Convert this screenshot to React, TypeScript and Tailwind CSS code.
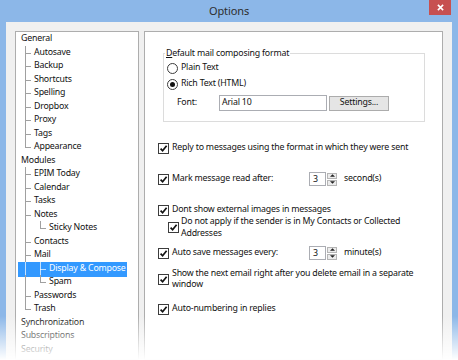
import React from "react";

type Row = { t: string; lv: number; v1?: "full" | "half" | "pass"; v2?: "full" | "half"; sel?: boolean };

const tree: Row[] = [
  { t: "General", lv: 0 },
  { t: "Autosave", lv: 1, v1: "full" },
  { t: "Backup", lv: 1, v1: "full" },
  { t: "Shortcuts", lv: 1, v1: "full" },
  { t: "Spelling", lv: 1, v1: "full" },
  { t: "Dropbox", lv: 1, v1: "full" },
  { t: "Proxy", lv: 1, v1: "full" },
  { t: "Tags", lv: 1, v1: "full" },
  { t: "Appearance", lv: 1, v1: "half" },
  { t: "Modules", lv: 0 },
  { t: "EPIM Today", lv: 1, v1: "full" },
  { t: "Calendar", lv: 1, v1: "full" },
  { t: "Tasks", lv: 1, v1: "full" },
  { t: "Notes", lv: 1, v1: "full" },
  { t: "Sticky Notes", lv: 2, v1: "pass", v2: "half" },
  { t: "Contacts", lv: 1, v1: "full" },
  { t: "Mail", lv: 1, v1: "full" },
  { t: "Display & Compose", lv: 2, v1: "pass", v2: "full", sel: true },
  { t: "Spam", lv: 2, v1: "pass", v2: "half" },
  { t: "Passwords", lv: 1, v1: "full" },
  { t: "Trash", lv: 1, v1: "half" },
  { t: "Synchronization", lv: 0 },
  { t: "Subscriptions", lv: 0 },
  { t: "Security", lv: 0 },
];

const font = { fontFamily: '"Noto Sans", "Liberation Sans", sans-serif' };

function TreeRow({ r }: { r: Row }) {
  const line = r.sel ? "bg-white/70" : "bg-[#a0a0a0]";
  const pad = r.lv === 0 ? "pl-[4px]" : r.lv === 1 ? "pl-[17px]" : "pl-[32px]";
  return (
    <div className={`relative h-[13.5px] flex items-center ${pad}`}>
      {r.sel && <span className="absolute left-[1px] right-[11px] top-[0.5px] h-[14.5px] bg-[#3399ff]" />}
      {r.v1 && (
        <span className={`absolute left-[8px] top-0 w-px ${line} ${r.v1 === "half" ? "h-[7px]" : "h-full"}`} />
      )}
      {r.lv === 1 && <span className={`absolute left-[8px] top-[7px] w-[6px] h-px ${line}`} />}
      {r.v2 && (
        <span className={`absolute left-[23px] top-0 w-px ${line} ${r.v2 === "half" ? "h-[7px]" : "h-full"}`} />
      )}
      {r.lv === 2 && <span className={`absolute left-[23px] top-[7px] w-[6px] h-px ${line}`} />}
      <span className={`relative leading-none whitespace-nowrap ${r.sel ? "text-white" : "text-[#111]"}`}>{r.t}</span>
    </div>
  );
}

function Check() {
  return (
    <span className="w-[11px] h-[11px] border border-[#3c3c3c] bg-white flex items-center justify-center shrink-0">
      <svg viewBox="0 0 9 9" className="w-[9px] h-[9px]">
        <path d="M1.6 4.6 L3.6 6.8 L7.6 1.8" stroke="#111" strokeWidth="1.7" fill="none" />
      </svg>
    </span>
  );
}

function Radio({ on }: { on?: boolean }) {
  return (
    <span className="w-[11px] h-[11px] rounded-full border border-[#3c3c3c] bg-white flex items-center justify-center shrink-0">
      {on && <span className="w-[5px] h-[5px] rounded-full bg-[#111]" />}
    </span>
  );
}

function Spin({ unit }: { unit: string }) {
  return (
    <div className="flex items-center">
      <div className="w-[17px] h-[14px] border border-[#abadb3] bg-white pl-[3px] leading-[12px]">3</div>
      <div className="flex flex-col gap-px ml-px">
        <span className="w-[10px] h-[6px] border border-[#b5b5b5] bg-[#ececec] flex items-center justify-center">
          <svg viewBox="0 0 6 3" className="w-[5px] h-[3px]"><path d="M0 3 L3 0 L6 3 Z" fill="#222" /></svg>
        </span>
        <span className="w-[10px] h-[6px] border border-[#b5b5b5] bg-[#ececec] flex items-center justify-center">
          <svg viewBox="0 0 6 3" className="w-[5px] h-[3px]"><path d="M0 0 L6 0 L3 3 Z" fill="#222" /></svg>
        </span>
      </div>
      <span className="ml-[7px]">{unit}</span>
    </div>
  );
}

export default function App() {
  return (
    <div className="relative w-[458px] h-[360px] overflow-hidden bg-[#8cb7e8] flex flex-col text-[8.8px] tracking-[-0.2px] text-[#111]" style={font}>
      <div className="relative h-[22px] shrink-0 flex items-center justify-center">
        <span className="text-[11px] tracking-[-0.1px] text-[#2e2e2e]">Options</span>
        <div className="absolute top-0 right-[7px] w-[22px] h-[15px] bg-[#c75050] flex items-center justify-center">
          <svg viewBox="0 0 8 8" className="w-[7px] h-[7px]">
            <path d="M1 1 L7 7 M7 1 L1 7" stroke="#fff" strokeWidth="1.8" />
          </svg>
        </div>
      </div>

      <div className="flex-1 mx-[6px] bg-[#f0f0f0] flex gap-[5px] pl-[9px] pr-[9px] pt-[9px]">
        <div className="w-[124px] bg-white border border-[#adadad] pl-px">
          {tree.map((r) => (
            <TreeRow key={r.t} r={r} />
          ))}
        </div>

        <div className="w-[299px] bg-white border border-[#adadad] pl-[13px]">
          <fieldset className="ml-[5px] mt-[14px] w-[262px] border border-[#dcdcdc] pl-[3px] pb-[10px]">
            <legend className="leading-[14px] px-[1px] -ml-[2px]">
              <span className="underline">D</span>efault mail composing format
            </legend>
            <div className="h-[14px] mt-[1px] flex items-center gap-[3px]">
              <Radio />
              <span>Plain Text</span>
            </div>
            <div className="h-[14px] mt-[2px] flex items-center gap-[3px]">
              <Radio on />
              <span>Rich Text (HTML)</span>
            </div>
            <div className="h-[16px] mt-[4px] flex items-center pl-[10px]">
              <span className="w-[42px]">Font:</span>
              <div className="w-[108px] h-[16px] border border-[#abadb3] bg-white pl-[2px] flex items-center">Arial 10</div>
              <div className="ml-[2px] w-[60px] h-[15px] border border-[#acacac] bg-[#e5e5e5] flex items-center justify-center">Settings...</div>
            </div>
          </fieldset>

          <div className="mt-[19px] h-[14px] flex items-center gap-[3px]">
            <Check />
            <span>Reply to messages using the format in which they were sent</span>
          </div>

          <div className="mt-[17px] h-[14px] flex items-center gap-[3px]">
            <Check />
            <span className="w-[134px]">Mark message read after:</span>
            <Spin unit="second(s)" />
          </div>

          <div className="mt-[17px] h-[14px] flex items-center gap-[3px]">
            <Check />
            <span>Dont show external images in messages</span>
          </div>
          <div className="ml-[10px] -mt-[2px] flex items-center gap-[2px]">
            <Check />
            <span className="leading-[12px]">
              Do not apply if the sender is in My Contacts or Collected
              <br />
              Addresses
            </span>
          </div>

          <div className="mt-[7px] h-[14px] flex items-center gap-[3px]">
            <Check />
            <span className="w-[134px]">Auto save messages every:</span>
            <Spin unit="minute(s)" />
          </div>

          <div className="mt-[8px] flex items-center gap-[3px]">
            <Check />
            <span className="leading-[11px]">
              Show the next email right after you delete email in a separate
              <br />
              window
            </span>
          </div>

          <div className="mt-[12px] h-[14px] flex items-center gap-[3px]">
            <Check />
            <span>Auto-numbering in replies</span>
          </div>
        </div>
      </div>

      <div className="absolute left-0 right-0 bottom-0 h-[44px] bg-gradient-to-b from-white/0 to-white" />
    </div>
  );
}
